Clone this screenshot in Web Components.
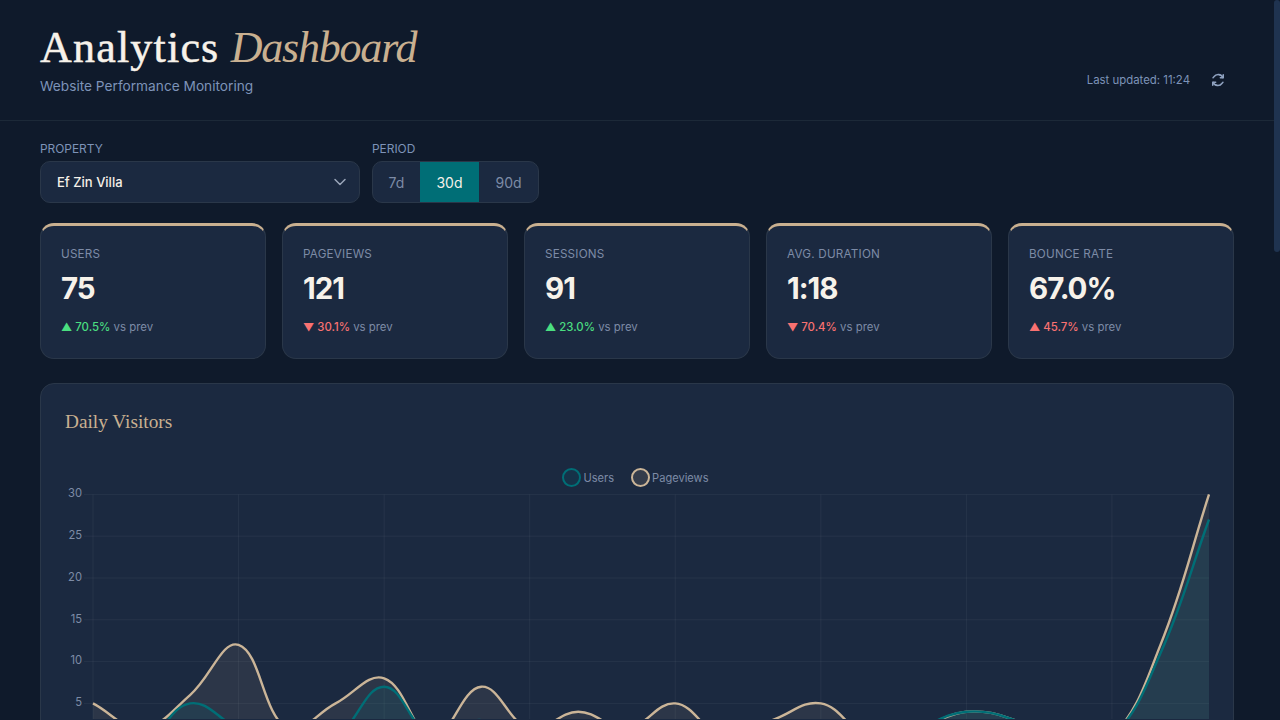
<!DOCTYPE html>
<html lang="en">
<head>
<meta charset="utf-8">
<title>Analytics Dashboard</title>
<style>
  html, body { margin: 0; padding: 0; height: 720px; overflow: hidden; background: #0f1a2b; }
  body { font-family: "Inter", "Liberation Sans", sans-serif; color: #f5f0e8; }
  dash-main { padding: 20px 46px 0 40px; }
</style>
</head>
<body>
<dash-header></dash-header>
<dash-main>
  <dash-controls></dash-controls>
  <dash-stats>
    <stat-card label="USERS" value="75" dir="up" tone="good" change="70.5%"></stat-card>
    <stat-card label="PAGEVIEWS" value="121" dir="down" tone="bad" change="30.1%"></stat-card>
    <stat-card label="SESSIONS" value="91" dir="up" tone="good" change="23.0%"></stat-card>
    <stat-card label="AVG. DURATION" value="1:18" dir="down" tone="bad" change="70.4%"></stat-card>
    <stat-card label="BOUNCE RATE" value="67.0%" dir="up" tone="bad" change="45.7%"></stat-card>
  </dash-stats>
  <visitors-chart></visitors-chart>
</dash-main>
<page-scrollbar></page-scrollbar>

<script>
class DashHeader extends HTMLElement {
  constructor() {
    super();
    this.attachShadow({mode: "open"}).innerHTML = `
    <style>
      :host { display: flex; justify-content: space-between; box-sizing: border-box; height: 121px;
        padding: 0 49px 0 40px; border-bottom: 1px solid #1c2938; width: 1274px; }
      h1 { margin: 24px 0 0; font: 400 44px/48px "Liberation Serif", serif; color: #f7f2ea; letter-spacing: 1.2px; -webkit-text-stroke: .5px #f7f2ea; }
      em { color: #c9b090; -webkit-text-stroke: 0; letter-spacing: -1.2px; margin-left: -1px; }
      p { margin: 4px 0 0; font-size: 13.7px; line-height: 20px; color: #7d93b8; }
      .right { display: flex; align-items: center; gap: 21px; height: 24px; margin-top: 68px; font-size: 11.4px; color: #7d93b8; }
      svg { display: block; }
    </style>
    <div>
      <h1>Analytics <em>Dashboard</em></h1>
      <p>Website Performance Monitoring</p>
    </div>
    <div class="right">
      <span>Last updated: 11:24</span>
      <svg width="14" height="14" viewBox="0 0 24 24" fill="none" stroke="#8fa2c0" stroke-width="2.6" stroke-linecap="round" stroke-linejoin="round">
        <path d="M21 3v5h-5"/><path d="M3 21v-5h5"/>
        <path d="M20.5 8A9 9 0 0 0 5 6.5L3.5 8"/><path d="M3.5 16A9 9 0 0 0 19 17.5l1.5-1.5"/>
      </svg>
    </div>`;
  }
}

class DashControls extends HTMLElement {
  constructor() {
    super();
    this.attachShadow({mode: "open"}).innerHTML = `
    <style>
      :host { display: flex; gap: 12px; }
      label { display: block; font-size: 11.9px; line-height: 16px; color: #7d93b8; margin-bottom: 4px; }
      .select { box-sizing: border-box; width: 320px; height: 42px; display: flex; align-items: center; justify-content: space-between;
        padding: 0 11px 0 16px; background: #1b2940; border: 1px solid #2a3749; border-radius: 10px; font-size: 13px; font-weight: 500; color: #f5f0e8; }
      .seg { display: flex; height: 42px; box-sizing: border-box; background: #1b2940; border: 1px solid #2a3749; border-radius: 10px; overflow: hidden; font-size: 14px; color: #7d8ba6; }
      .seg span { display: flex; align-items: center; justify-content: center; width: 59px; }
      .seg span:first-child { width: 47px; }
      .seg .on { background: #006e76; color: #f5f0e8; }
      svg { display: block; }
    </style>
    <div>
      <label>PROPERTY</label>
      <div class="select">Ef Zin Villa
        <svg width="16" height="16" viewBox="0 0 16 16" fill="none" stroke="#9aa5b8" stroke-width="1.5" stroke-linecap="round" stroke-linejoin="round"><path d="M3 5.5l5 5 5-5"/></svg>
      </div>
    </div>
    <div>
      <label>PERIOD</label>
      <div class="seg"><span>7d</span><span class="on">30d</span><span>90d</span></div>
    </div>`;
  }
}

class DashStats extends HTMLElement {
  constructor() {
    super();
    this.attachShadow({mode: "open"}).innerHTML = `
    <style>
      :host { display: grid; grid-template-columns: repeat(5, 1fr); gap: 16px; margin-top: 20px; width: 1194px; }
    </style>
    <slot></slot>`;
  }
}

class StatCard extends HTMLElement {
  connectedCallback() {
    const arrow = this.getAttribute("dir") === "up" ? "▲" : "▼";
    const tone = this.getAttribute("tone") === "good" ? "#4ade80" : "#f87171";
    this.attachShadow({mode: "open"}).innerHTML = `
    <style>
      :host { display: block; box-sizing: border-box; height: 136px; padding: 20px 20px 0; background: #1b2940;
        border: 1px solid #2a3749; border-top: 3px solid #c9b090; border-radius: 14px; }
      .label { font-size: 11.7px; line-height: 16px; letter-spacing: .2px; color: #7d8ba6; }
      .value { margin-top: 6px; font-size: 29.5px; line-height: 40px; font-weight: 700; color: #f7f2ea; letter-spacing: -1px; }
      .change { margin-top: 11px; font-size: 11.4px; line-height: 16px; color: #7d8ba6; }
      .change b { font-weight: 500; color: ${tone}; }
      .change small { font-size: 11px; }
    </style>
    <div class="label">${this.getAttribute("label")}</div>
    <div class="value">${this.getAttribute("value")}</div>
    <div class="change"><b><small>${arrow}</small> ${this.getAttribute("change")}</b> vs prev</div>`;
  }
}

class VisitorsChart extends HTMLElement {
  constructor() {
    super();
    this.attachShadow({mode: "open"});
  }

  // same bezier smoothing as a line chart with tension .4
  curve(points) {
    const t = 0.4;
    const ctrl = points.map((p, i) => {
      const a = points[i - 1] || p, b = points[i + 1] || p;
      const d01 = Math.hypot(p.x - a.x, p.y - a.y), d12 = Math.hypot(b.x - p.x, b.y - p.y);
      const s = d01 + d12 || 1;
      const fa = t * d01 / s, fb = t * d12 / s;
      return {
        px: p.x - fa * (b.x - a.x), py: p.y - fa * (b.y - a.y),
        nx: p.x + fb * (b.x - a.x), ny: p.y + fb * (b.y - a.y)
      };
    });
    let d = `M${points[0].x} ${points[0].y}`;
    for (let i = 1; i < points.length; i++) {
      d += `C${ctrl[i - 1].nx} ${ctrl[i - 1].ny} ${ctrl[i].px} ${ctrl[i].py} ${points[i].x} ${points[i].y}`;
    }
    return d;
  }

  connectedCallback() {
    const X0 = 52, STEP = 1116 / 23, Y0 = 361.2, UNIT = 8.36;
    const users = [0,0,5,2,0,1,7,1,3,0,2,0,3,0,1,2,0,2,4,3,0,1,11,27];
    const views = [5,2,6,12,2,5,8,1,7,2,4,2,5,1,3,5,1,2,4,3,0,1,12,30];
    const pts = data => data.map((v, i) => ({x: X0 + i * STEP, y: Y0 - v * UNIT}));

    let grid = "";
    [0,5,10,15,20,25,30].forEach(v => {
      const y = Y0 - v * UNIT;
      grid += `<line x1="43" x2="1168" y1="${y}" y2="${y}"/>`;
      if (v) grid += `<text x="41" y="${y + 2.8}" text-anchor="end">${v}</text>`;
    });
    for (let i = 0; i < 8; i++) {
      const x = X0 + i * 3 * STEP;
      grid += `<line x1="${x}" x2="${x}" y1="110.5" y2="380"/>`;
    }

    const series = (data, color, fill) => {
      const p = pts(data), d = this.curve(p);
      return `<path d="${d}L${p[p.length - 1].x} ${Y0}L${X0} ${Y0}Z" fill="${fill}"/>
        <path d="${d}" fill="none" stroke="${color}" stroke-width="2.4"/>`;
    };

    this.shadowRoot.innerHTML = `
    <style>
      :host { display: block; box-sizing: border-box; width: 1194px; height: 420px; margin-top: 24px; padding: 24px 24px 0;
        background: #1b2940; border: 1px solid #2a3749; border-radius: 14px; position: relative; }
      h2 { margin: 0; font: 400 19.3px/28px "Liberation Serif", serif; color: #c9b090; }
      .legend { display: flex; justify-content: center; align-items: center; gap: 17px; margin-top: 32px; padding-right: 3px; font-size: 11.1px; color: #7d8ba6; }
      .legend span { display: flex; align-items: center; gap: 2px; }
      i { display: block; box-sizing: border-box; width: 19px; height: 19px; border-radius: 50%; border: 2px solid; }
      svg { display: block; position: absolute; left: 0; top: 0; }
      svg line { stroke: rgba(255,255,255,.05); stroke-width: 1; }
      svg text { font: 11.2px "Inter", "Liberation Sans", sans-serif; fill: #7d8ba6; }
    </style>
    <h2>Daily Visitors</h2>
    <div class="legend">
      <span><i style="border-color:#006e76;background:rgba(0,110,118,.15)"></i>Users</span>
      <span><i style="border-color:#cbb598;background:rgba(201,176,144,.15)"></i>Pageviews</span>
    </div>
    <svg width="1192" height="335" viewBox="0 0 1192 335">
      ${grid}
      ${series(views, "#cbb598", "rgba(201,176,144,.1)")}
      ${series(users, "#006e76", "rgba(0,110,118,.15)")}
    </svg>`;
  }
}

class PageScrollbar extends HTMLElement {
  constructor() {
    super();
    this.attachShadow({mode: "open"}).innerHTML = `
    <style>
      :host { display: block; position: fixed; right: 0; top: 0; width: 6px; height: 720px; background: #0f1a2b; }
      div { height: 252px; background: #1f3350; border-radius: 3px; }
    </style>
    <div></div>`;
  }
}

customElements.define("dash-header", DashHeader);
customElements.define("dash-controls", DashControls);
customElements.define("dash-stats", DashStats);
customElements.define("stat-card", StatCard);
customElements.define("visitors-chart", VisitorsChart);
customElements.define("page-scrollbar", PageScrollbar);
customElements.define("dash-main", class extends HTMLElement {
  constructor() {
    super();
    this.attachShadow({mode: "open"}).innerHTML = `<style>:host { display: block; }</style><slot></slot>`;
  }
});
</script>
</body>
</html>
